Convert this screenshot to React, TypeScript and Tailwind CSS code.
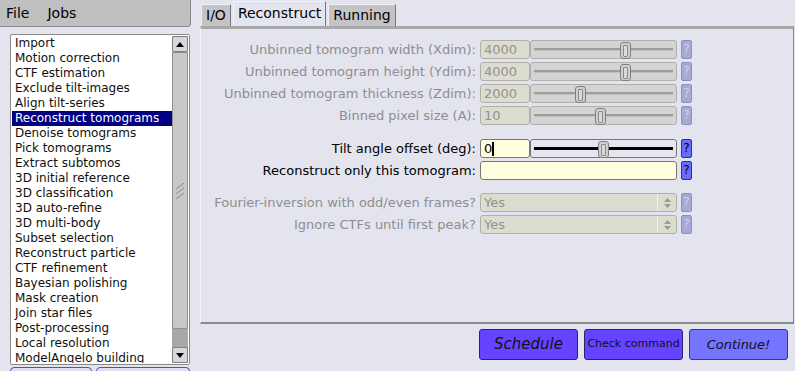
import React from 'react';

const font = { fontFamily: '"DejaVu Sans", Verdana, sans-serif' };

const jobs = [
  'Import',
  'Motion correction',
  'CTF estimation',
  'Exclude tilt-images',
  'Align tilt-series',
  'Reconstruct tomograms',
  'Denoise tomograms',
  'Pick tomograms',
  'Extract subtomos',
  '3D initial reference',
  '3D classification',
  '3D auto-refine',
  '3D multi-body',
  'Subset selection',
  'Reconstruct particle',
  'CTF refinement',
  'Bayesian polishing',
  'Mask creation',
  'Join star files',
  'Post-processing',
  'Local resolution',
  'ModelAngelo building',
];

const Thumb: React.FC<{ left: number }> = ({ left }) => (
  <div
    className="absolute top-[1px] w-[11px] h-[17px] rounded-[3px] border border-[#808080] bg-[#cfcfcf] flex items-center justify-center"
    style={{ left }}
  >
    <div className="w-[5px] h-[12px] border border-[#8a8a8a] rounded-[1px] bg-[#dadada]" />
  </div>
);

const Help: React.FC<{ on?: boolean }> = ({ on }) => (
  <div
    className={
      on
        ? 'w-[11px] h-[19px] rounded-[2px] border border-[#303090] bg-[#6a6aff] text-black text-[12px] leading-[17px] text-center'
        : 'w-[11px] h-[19px] rounded-[2px] border border-[#9090c0] bg-[#a8a8d8] text-[#d0d0ec] text-[12px] leading-[17px] text-center'
    }
  >
    ?
  </div>
);

const SliderRow: React.FC<{ label: string; value: string; thumb: number; on?: boolean }> = ({
  label,
  value,
  thumb,
  on,
}) => (
  <div className="flex items-center h-[19px]">
    <div
      className={`w-[279px] text-right pr-[4px] text-[13px] ${on ? 'text-black' : 'text-[#8e8e8e]'}`}
    >
      {label}
    </div>
    <div
      className={`w-[50px] h-[19px] rounded-[3px] border pl-[3px] text-[13px] leading-[17px] ${
        on ? 'border-[#777] bg-[#ffffe0] text-black' : 'border-[#b0b0a8] bg-[#dcdcd0] text-[#929292]'
      }`}
    >
      {value}
      {on && <span className="inline-block w-[2px] h-[14px] bg-black align-middle -mt-[2px]" />}
    </div>
    <div
      className={`relative w-[147px] h-[19px] rounded-[3px] border ${
        on ? 'border-[#777] bg-[#e6e6ee]' : 'border-[#b0b0b0] bg-[#d4d4d4]'
      }`}
    >
      <div
        className={`absolute left-[3px] right-[3px] top-[7px] ${
          on ? 'h-[3px] bg-black' : 'h-[3px] bg-[#9c9c9c] border-b border-[#c0c0c0]'
        }`}
      />
      <Thumb left={thumb} />
    </div>
    <div className="ml-[4px]">
      <Help on={on} />
    </div>
  </div>
);

const TextRow: React.FC<{ label: string }> = ({ label }) => (
  <div className="flex items-center h-[19px]">
    <div className="w-[279px] text-right pr-[4px] text-[13px] text-black">{label}</div>
    <div className="w-[197px] h-[19px] rounded-[3px] border border-[#777] bg-[#ffffe0]" />
    <div className="ml-[4px]">
      <Help on />
    </div>
  </div>
);

const ChoiceRow: React.FC<{ label: string }> = ({ label }) => (
  <div className="flex items-center h-[19px]">
    <div className="w-[279px] text-right pr-[4px] text-[13px] text-[#8e8e8e]">{label}</div>
    <div className="w-[197px] h-[19px] rounded-[3px] border border-[#b0b0a8] bg-[#dcdcd0] flex text-[13px] leading-[17px] text-[#929292]">
      <div className="flex-1 pl-[3px]">Yes</div>
      <div className="w-[19px] border-l border-[#f0f0f0] flex flex-col items-center justify-center gap-[2px]">
        <svg width="7" height="4" viewBox="0 0 7 4">
          <path d="M0 4 L3.5 0 L7 4 Z" fill="#9a9a9a" />
        </svg>
        <svg width="7" height="4" viewBox="0 0 7 4">
          <path d="M0 0 L3.5 4 L7 0 Z" fill="#9a9a9a" />
        </svg>
      </div>
    </div>
    <div className="ml-[4px]">
      <Help />
    </div>
  </div>
);

export default function App() {
  return (
    <div className="w-[795px] h-[371px] overflow-hidden bg-[#e4e4ee] flex text-black" style={font}>
      {/* left column */}
      <div className="w-[200px] shrink-0 flex flex-col">
        <div className="shrink-0 w-[191px] h-[27px] bg-[#c0c0c0] border-b border-r border-[#888] rounded-br-[4px] flex items-center text-[14px] pl-[6px] gap-[18px]">
          <span>File</span>
          <span>Jobs</span>
        </div>
        <div className="shrink-0 mt-[7px] ml-[10px] w-[180px] h-[331px] rounded-[2px] border border-[#8a8a8a] bg-white flex p-[1px]">
          <div className="flex-1 overflow-hidden text-[12px] leading-[15px] text-[#101010]">
            {jobs.map((j) => (
              <div
                key={j}
                className={`h-[15px] pl-[3px] whitespace-nowrap ${
                  j === 'Reconstruct tomograms' ? 'bg-[#000080] text-white' : ''
                }`}
              >
                {j}
              </div>
            ))}
          </div>
          <div className="w-[16px] flex flex-col bg-[#a8a8a8]">
            <div className="shrink-0 h-[16px] rounded-[2px] border border-[#808080] bg-[#d8d8d8] flex items-center justify-center">
              <svg width="8" height="5" viewBox="0 0 8 5">
                <path d="M0 5 L4 0 L8 5 Z" fill="#000" />
              </svg>
            </div>
            <div className="shrink-0 h-[277px] rounded-[2px] border border-[#909090] bg-[#c8c8c8] flex items-center justify-center">
              <svg width="10" height="16" viewBox="0 0 10 16">
                <path d="M1 6 L9 0 M1 11 L9 5 M1 16 L9 10" stroke="#888" strokeWidth="1" />
              </svg>
            </div>
            <div className="flex-1" />
            <div className="shrink-0 h-[16px] rounded-[2px] border border-[#808080] bg-[#d8d8d8] flex items-center justify-center">
              <svg width="8" height="5" viewBox="0 0 8 5">
                <path d="M0 0 L4 5 L8 0 Z" fill="#000" />
              </svg>
            </div>
          </div>
        </div>
        <div className="shrink-0 mt-[2px] ml-[10px] flex gap-[4px]">
          <div className="w-[82px] h-[10px] rounded-t-[4px] border border-[#5050c0] bg-[#e0e0f0]" />
          <div className="w-[94px] h-[10px] rounded-t-[4px] border border-[#5050c0] bg-[#e0e0f0]" />
        </div>
      </div>

      {/* right column */}
      <div className="flex-1 flex flex-col">
        <div className="shrink-0 h-[26px] flex items-end pl-[1px] gap-[2px] text-[14px]">
          <div className="h-[22px] px-[4px] bg-[#c4c4c8] border-l border-t border-[#f0f0f0] border-r-[#777] border-r leading-[21px]">
            I/O
          </div>
          <div className="h-[25px] px-[4px] bg-[#e4e4ee] border-l border-t border-[#f4f4f8] border-r-[#777] border-r leading-[22px]">
            Reconstruct
          </div>
          <div className="h-[22px] px-[4px] bg-[#c4c4c8] border-l border-t border-[#f0f0f0] border-r-[#777] border-r leading-[21px]">
            Running
          </div>
        </div>
        <div className="shrink-0 w-[594px] h-[298px] border-t-[3px] border-t-[#a8a8a8] border-l border-l-[#f4f4f8] border-r border-r-[#888] border-b-2 border-b-[#888] flex flex-col pt-[11px]">
          <div className="flex flex-col gap-[3px]">
            <SliderRow label="Unbinned tomogram width (Xdim):" value="4000" thumb={89} />
            <SliderRow label="Unbinned tomogram height (Ydim):" value="4000" thumb={89} />
            <SliderRow label="Unbinned tomogram thickness (Zdim):" value="2000" thumb={44} />
            <SliderRow label="Binned pixel size (A):" value="10" thumb={64} />
          </div>
          <div className="mt-[14px] flex flex-col gap-[3px]">
            <SliderRow label="Tilt angle offset (deg):" value="0" thumb={67} on />
            <TextRow label="Reconstruct only this tomogram:" />
          </div>
          <div className="mt-[13px] flex flex-col gap-[3px]">
            <ChoiceRow label="Fourier-inversion with odd/even frames?" />
            <ChoiceRow label="Ignore CTFs until first peak?" />
          </div>
        </div>
        <div className="shrink-0 mt-[5px] pl-[279px] flex gap-[6px]">
          <div className="w-[99px] h-[31px] rounded-[3px] border border-[#302070] bg-[#6644ff] flex items-center justify-center italic text-[15px] text-[#101020]">
            Schedule
          </div>
          <div className="w-[99px] h-[31px] rounded-[3px] border border-[#302070] bg-[#6644ff] flex items-center justify-center text-[11px] text-[#101020]">
            Check command
          </div>
          <div className="w-[99px] h-[31px] rounded-[3px] border border-[#403090] bg-[#7474ff] flex items-center justify-center italic text-[13px] text-[#101020]">
            Continue!
          </div>
        </div>
      </div>
    </div>
  );
}
